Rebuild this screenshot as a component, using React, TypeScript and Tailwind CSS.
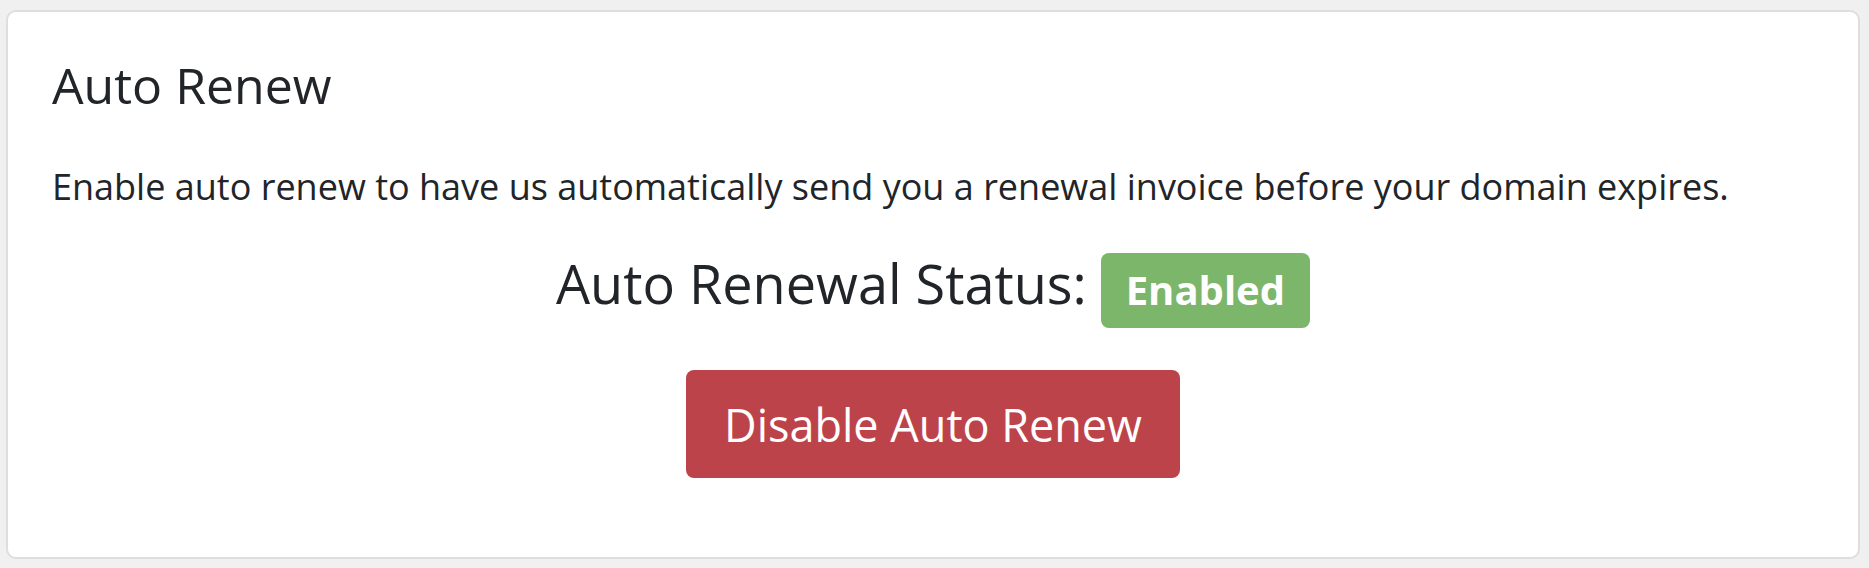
import React from "react";

export default function App() {
  return (
    <div
      className="w-[1869px] h-[568px] bg-[#f0f0f0] pl-[6px] pr-[9px] pt-[10px] pb-[9px]"
      style={{ fontFamily: '"Open Sans", "Noto Sans", sans-serif' }}
    >
      <div className="h-full bg-white border-2 border-[#dedede] rounded-[10px] px-[44px] pt-[43px] flex flex-col text-[#212529]">
        <h3 className="text-[50px] leading-[60px] font-normal">Auto Renew</h3>
        <p className="mt-[46px] text-[36px] leading-[51px]">
          Enable auto renew to have us automatically send you a renewal invoice before your domain expires.
        </p>
        <div className="mt-[34px] flex items-center justify-center">
          <span className="text-[54px] leading-[75px] mb-[13px]">Auto Renewal Status:</span>
          <span className="ml-[14px] h-[75px] px-[25px] inline-flex items-center rounded-[8px] bg-[#7cb66a] text-white text-[40px] font-bold leading-none">
            Enabled
          </span>
        </div>
        <div className="mt-[36px] flex justify-center">
          <button className="h-[108px] px-[38px] rounded-[8px] bg-[#bd434b] text-white text-[45px] leading-none">
            Disable Auto Renew
          </button>
        </div>
      </div>
    </div>
  );
}
